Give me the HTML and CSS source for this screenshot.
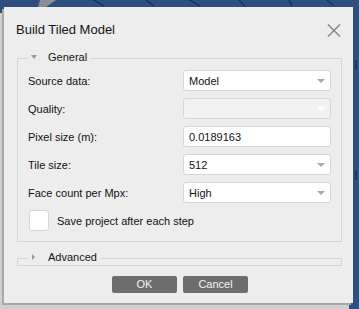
FILE: index.html
```html
<!DOCTYPE html>
<html>
<head>
<meta charset="utf-8">
<link rel="stylesheet" href="styles.css">
</head>
<body>
<svg class="backdrop" width="359" height="309" viewBox="0 0 359 309">
  <polygon points="40,0 56,0 46,7 38,7" fill="#8a8f96"/>
  <g stroke="#0d1e38" stroke-width="1" fill="none">
    <line x1="94" y1="0" x2="104" y2="6"/>
    <line x1="146" y1="0" x2="154" y2="6"/>
    <line x1="190" y1="0" x2="200" y2="6"/>
    <line x1="239" y1="0" x2="245" y2="6"/>
    <line x1="289" y1="0" x2="292" y2="6"/>
    <line x1="327" y1="0" x2="334" y2="6"/>
    <line x1="356" y1="60" x2="356" y2="70"/>
    <line x1="356" y1="170" x2="356" y2="180"/>
  </g>
</svg>
<div class="dialog">
  <div class="titlebar">
    <h1 class="title">Build Tiled Model</h1>
    <svg class="close" width="14" height="13" viewBox="0 0 14 13">
      <path d="M1 0.5 L13 12.5 M13 0.5 L1 12.5" stroke="#8c8c8c" stroke-width="1.6" fill="none"/>
    </svg>
  </div>
  <fieldset class="group">
    <legend class="group-head"><span class="tri tri-down"></span><span class="group-name">General</span></legend>
    <div class="form">
      <span class="label">Source data:</span>
      <div class="field combo"><span>Model</span><span class="arrow"></span></div>
      <span class="label">Quality:</span>
      <div class="field combo disabled"><span></span><span class="arrow"></span></div>
      <span class="label">Pixel size (m):</span>
      <div class="field"><span>0.0189163</span></div>
      <span class="label">Tile size:</span>
      <div class="field combo"><span>512</span><span class="arrow"></span></div>
      <span class="label">Face count per Mpx:</span>
      <div class="field combo"><span>High</span><span class="arrow"></span></div>
    </div>
    <div class="check-row"><span class="checkbox"></span><span class="label">Save project after each step</span></div>
  </fieldset>
  <fieldset class="group collapsed">
    <legend class="group-head"><span class="tri tri-right"></span><span class="group-name">Advanced</span></legend>
  </fieldset>
  <div class="buttons">
    <button class="btn">OK</button>
    <button class="btn">Cancel</button>
  </div>
</div>
</body>
</html>
```
FILE: styles.css
```css
html, body {
  margin: 0;
  padding: 0;
}
body {
  width: 359px;
  height: 309px;
  overflow: hidden;
  background: #2e4f7f;
  position: relative;
  font-family: "Liberation Sans", Arial, sans-serif;
  font-size: 11px;
  color: #111;
}
.backdrop {
  position: absolute;
  left: 0;
  top: 0;
}
.dialog {
  position: relative;
  box-sizing: border-box;
  width: 349px;
  height: 296px;
  margin: 7px 0 0 4px;
  background: #ededed;
  box-shadow: -2px 2px 0 #a8a8a8, -4px 6px 0 #cfcfcf;
  display: flex;
  flex-direction: column;
}
.titlebar {
  height: 46px;
  padding: 0 12px 0 12px;
  display: flex;
  align-items: center;
  justify-content: space-between;
}
.title {
  margin: 0;
  font-size: 13px;
  font-weight: normal;
  line-height: 18px;
  color: #141414;
}
.close {
  display: block;
}
.group {
  margin: 4px 11px 0 13px;
  padding: 0 10px 10px 10px;
  border: 1px solid #d5d5d5;
  min-width: 0;
}
.group-head {
  padding: 0 3px;
  height: 2px;
  line-height: 2px;
  display: flex;
  align-items: center;
}
.group-name {
  line-height: 14px;
  padding-bottom: 3px;
  color: #141414;
}
.tri {
  width: 0;
  height: 0;
  margin-bottom: 2px;
}
.tri-down {
  border-left: 3px solid transparent;
  border-right: 3px solid transparent;
  border-top: 4px solid #9a9a9a;
  margin-right: 11px;
}
.tri-right {
  border-top: 3px solid transparent;
  border-bottom: 3px solid transparent;
  border-left: 3px solid #9a9a9a;
  margin-left: 1px;
  margin-right: 13px;
}
.form {
  margin-top: 11px;
  display: grid;
  grid-template-columns: 1fr 148px;
  grid-auto-rows: 21px;
  row-gap: 7px;
  align-items: center;
}
.label {
  line-height: 14px;
  white-space: nowrap;
}
.field {
  box-sizing: border-box;
  height: 21px;
  background: #ffffff;
  border: 1px solid #d6d6d6;
  border-radius: 3px;
  padding: 0 5px;
  display: flex;
  align-items: center;
  justify-content: space-between;
}
.field.disabled {
  background: #f2f2f2;
}
.arrow {
  width: 0;
  height: 0;
  border-left: 4px solid transparent;
  border-right: 4px solid transparent;
  border-top: 4px solid #a9a9a9;
}
.disabled .arrow {
  border-top-color: #ffffff;
}
.check-row {
  margin-top: 7px;
  display: flex;
  align-items: center;
  gap: 8px;
}
.checkbox {
  box-sizing: border-box;
  width: 20px;
  height: 21px;
  margin-left: 1px;
  background: #ffffff;
  border: 1px solid #d6d6d6;
  border-radius: 3px;
}
.collapsed {
  margin-top: 15px;
  padding: 0 10px 6px 10px;
}
.buttons {
  margin-top: 10px;
  padding-left: 3px;
  display: flex;
  justify-content: center;
  gap: 6px;
}
.btn {
  width: 65px;
  height: 17px;
  padding: 0;
  border: none;
  border-radius: 2px;
  background: #6d6d6d;
  color: #f4f4f4;
  font-family: "Liberation Sans", Arial, sans-serif;
  font-size: 11px;
  line-height: 17px;
}
```
